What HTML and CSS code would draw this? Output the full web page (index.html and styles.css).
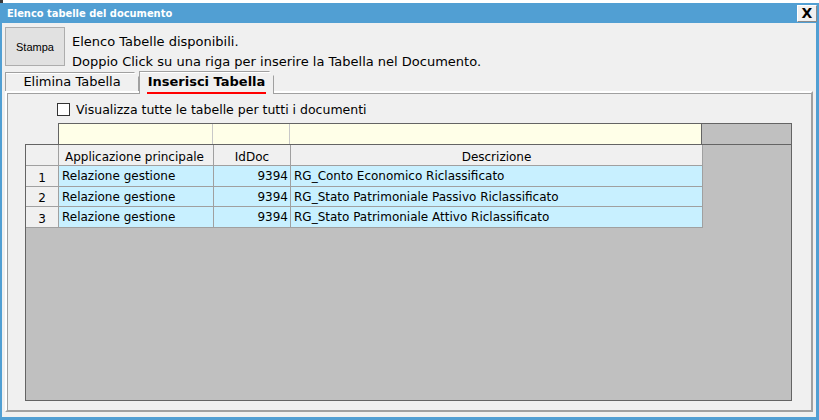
FILE: index.html
```html
<!DOCTYPE html>
<html lang="it">
<head>
    <meta charset="UTF-8">
    <title>Elenco tabelle del documento</title>
    <link rel="stylesheet" href="styles.css">
</head>
<body>
    <div class="topstrip"></div>
    <div class="window">
        <div class="titlebar">
            <span class="title">Elenco tabelle del documento</span>
            <button class="close">X</button>
        </div>
        <div class="content">
            <div class="header">
                <button class="stampa">Stampa</button>
                <div class="info">
                    <div>Elenco Tabelle disponibili.</div>
                    <div>Doppio Click su una riga per inserire la Tabella nel Documento.</div>
                </div>
            </div>

            <div class="tabs">
                <div class="tab">Elimina Tabella</div>
                <div class="tab active"><span>Inserisci Tabella</span></div>
            </div>

            <div class="panel">
                <label class="check"><span class="box"></span>Visualizza tutte le tabelle per tutti i documenti</label>

                <div class="filter">
                    <div class="fcell c1"></div>
                    <div class="fcell c2"></div>
                    <div class="fcell c3"></div>
                    <div class="ftail"></div>
                </div>
                <div class="grid">
                    <div class="row head">
                        <div class="cell c0"></div>
                        <div class="cell c1">Applicazione principale</div>
                        <div class="cell c2 center">IdDoc</div>
                        <div class="cell c3 center">Descrizione</div>
                    </div>
                    <div class="row data">
                        <div class="cell c0">1</div>
                        <div class="cell c1">Relazione gestione</div>
                        <div class="cell c2 num">9394</div>
                        <div class="cell c3">RG_Conto Economico Riclassificato</div>
                    </div>
                    <div class="row data">
                        <div class="cell c0">2</div>
                        <div class="cell c1">Relazione gestione</div>
                        <div class="cell c2 num">9394</div>
                        <div class="cell c3">RG_Stato Patrimoniale Passivo Riclassificato</div>
                    </div>
                    <div class="row data">
                        <div class="cell c0">3</div>
                        <div class="cell c1">Relazione gestione</div>
                        <div class="cell c2 num">9394</div>
                        <div class="cell c3">RG_Stato Patrimoniale Attivo Riclassificato</div>
                    </div>
                </div>
            </div>
        </div>
    </div>
</body>
</html>
```

FILE: styles.css
```css
* {
    box-sizing: border-box;
}

body {
    margin: 0;
    width: 819px;
    height: 420px;
    overflow: hidden;
    background-color: #fff;
    font-family: "DejaVu Sans", Verdana, sans-serif;
    font-size: 12px;
    color: #000;
}

.topstrip {
    height: 3px;
    border-left: 3px solid #3a3a3a;
}

.window {
    height: 417px;
    background-color: #519fd3;
    padding: 0 3px 3px 2px;
    display: flex;
    flex-direction: column;
}

.titlebar {
    height: 20px;
    display: flex;
    align-items: center;
    justify-content: space-between;
    padding-left: 5px;
}

.title {
    color: white;
    font-family: "DejaVu Sans Condensed", "DejaVu Sans", sans-serif;
    font-weight: bold;
    font-size: 11px;
}

.close {
    width: 20px;
    height: 17px;
    margin-right: -1px;
    padding: 0;
    border: 1px solid #8a8a8a;
    border-top-color: #fff;
    border-left-color: #fff;
    background-color: #f0f0f0;
    font-family: "DejaVu Sans", sans-serif;
    font-weight: bold;
    font-size: 14px;
    line-height: 14px;
}

.content {
    flex: 1;
    background-color: #f0f0f0;
    padding: 4px 3px 5px 3px;
    display: flex;
    flex-direction: column;
}

.header {
    display: flex;
    gap: 7px;
    height: 44px;
}

.stampa {
    width: 60px;
    height: 39px;
    padding: 0;
    border: 1px solid #adadad;
    background-color: #e1e1e1;
    font-family: "Liberation Sans", Arial, sans-serif;
    font-size: 11px;
}

.info {
    padding-top: 5px;
    line-height: 20px;
    font-size: 13px;
}

.tabs {
    display: flex;
    height: 20px;
    align-items: flex-end;
    font-size: 13px;
    position: relative;
    z-index: 1;
}

.tab {
    width: 134px;
    height: 19px;
    border: 1px solid #a0a0a0;
    border-bottom: none;
    clip-path: polygon(0 0, calc(100% - 5px) 0, 100% 5px, 100% 100%, 0 100%);
    background: linear-gradient(#fff, #fff) top / 100% 1px no-repeat, #f0f0f0;
    text-align: center;
    line-height: 18px;
}

.tab.active {
    width: 135px;
    height: 23px;
    margin-bottom: -3px;
    font-weight: bold;
    line-height: 19px;
}

.tab.active span {
    display: inline-block;
    border-bottom: 2px solid #ff0000;
    line-height: 20px;
    padding: 0 1px;
}

.panel {
    flex: 1;
    border: 2px solid #a0a0a0;
    border-top-color: #fff;
    border-left-color: #fff;
    box-shadow: inset 1px 1px 0 #a0a0a0;
    padding: 9px 0 0 18px;
}

.check {
    display: flex;
    align-items: center;
    margin-left: 32px;
    height: 14px;
    font-size: 12.5px;
}

.box {
    width: 13px;
    height: 13px;
    border: 1px solid #333;
    background-color: #fff;
    margin-right: 6px;
}

.filter {
    display: flex;
    margin-top: 7px;
    margin-left: 33px;
    height: 21px;
    width: 734px;
    border: 1px solid #646464;
    border-bottom: none;
}

.fcell {
    background-color: #ffffe8;
    border-right: 1px solid #c8c8c8;
}

.filter .c1 { width: 154px; }
.filter .c2 { width: 77px; }
.filter .c3 { width: 412px; border-right-color: #646464; }

.ftail {
    flex: 1;
    background-color: #c0c0c0;
}

.grid {
    width: 767px;
    height: 257px;
    border: 1px solid #646464;
    background-color: #c0c0c0;
}

.row {
    display: flex;
    height: 21px;
    width: 677px;
}

.row.data {
    height: 20.5px;
}

.cell {
    border-right: 1px solid #a0a0a0;
    border-bottom: 1px solid #a0a0a0;
    padding: 0 3px;
    white-space: nowrap;
    overflow: hidden;
    display: flex;
    align-items: center;
}

.head .cell {
    background-color: #f0f0f0;
    padding-top: 3px;
}

.data .cell {
    background-color: #c8f0ff;
    padding-top: 1px;
}

.data .c0,
.head .c0 {
    background-color: #f0f0f0;
    justify-content: center;
    padding-top: 4px;
}

.c0 { width: 33px; }
.c1 { width: 155px; }
.c2 { width: 77px; }
.c3 { width: 412px; }

.head .c1 { padding-left: 6px; }

.center {
    justify-content: center;
}

.num {
    justify-content: flex-end;
    padding-right: 2px;
}
```
